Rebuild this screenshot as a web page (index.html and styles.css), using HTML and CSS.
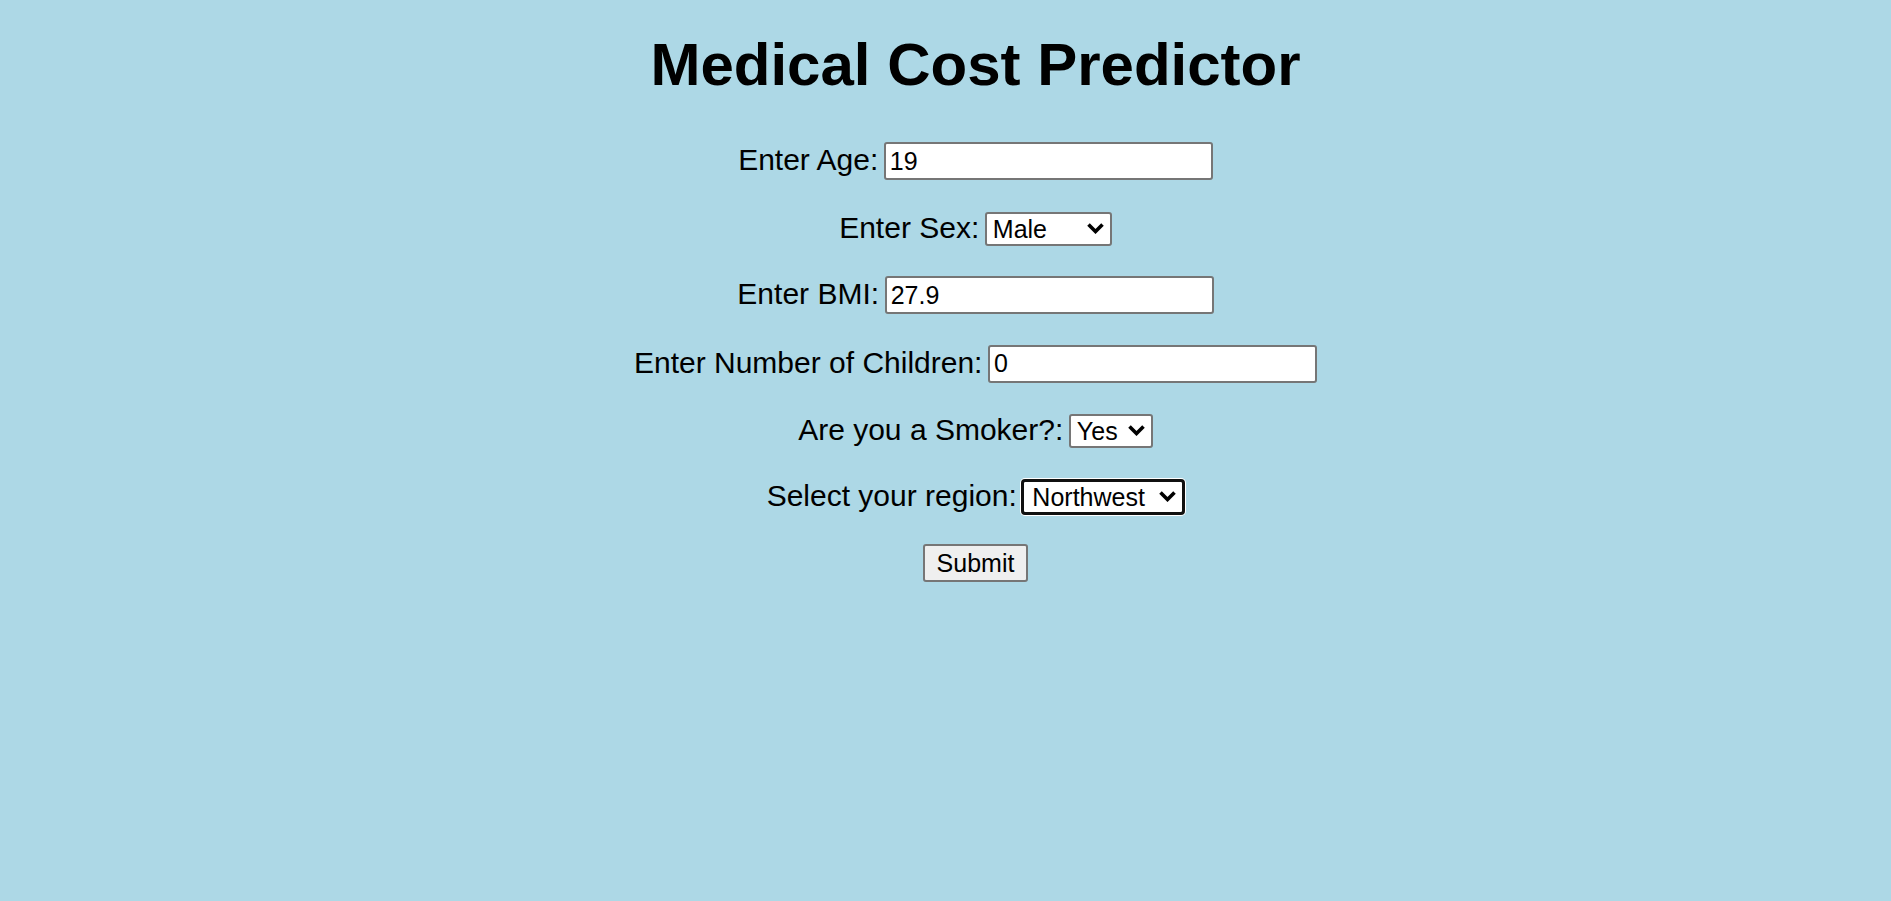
FILE: index.html
```html
<!DOCTYPE html>
<html lang="en">
<head>
<meta charset="utf-8">
<title>Medical Cost Predictor</title>
<link rel="stylesheet" href="styles.css">
</head>
<body>
<main class="page">
  <h1 class="title">Medical Cost Predictor</h1>
  <form class="form">
    <div class="row"><label class="label" for="age">Enter Age:</label> <input class="field" id="age" type="text" value="19"></div>
    <div class="row"><label class="label" for="sex">Enter Sex:</label> <span class="select-wrap"><select class="select select-sex" id="sex"><option>Male</option><option>Female</option></select><svg class="chevron" width="17" height="11" viewBox="0 0 17 11"><polyline points="1.5,1.5 8.5,8.5 15.5,1.5" fill="none" stroke="#000" stroke-width="3.6"/></svg></span></div>
    <div class="row"><label class="label" for="bmi">Enter BMI:</label> <input class="field" id="bmi" type="text" value="27.9"></div>
    <div class="row"><label class="label" for="children">Enter Number of Children:</label> <input class="field" id="children" type="text" value="0"></div>
    <div class="row"><label class="label" for="smoker">Are you a Smoker?:</label> <span class="select-wrap"><select class="select select-smoker" id="smoker"><option>Yes</option><option>No</option></select><svg class="chevron" width="17" height="11" viewBox="0 0 17 11"><polyline points="1.5,1.5 8.5,8.5 15.5,1.5" fill="none" stroke="#000" stroke-width="3.6"/></svg></span></div>
    <div class="row"><label class="label" for="region">Select your region:</label> <span class="select-wrap"><select class="select select-region is-focused" id="region"><option>Northwest</option><option>Northeast</option><option>Southeast</option><option>Southwest</option></select><svg class="chevron" width="17" height="11" viewBox="0 0 17 11"><polyline points="1.5,1.5 8.5,8.5 15.5,1.5" fill="none" stroke="#000" stroke-width="3.6"/></svg></span></div>
    <div class="row"><button class="submit" type="button">Submit</button></div>
  </form>
</main>
</body>
</html>
```
FILE: styles.css
```css
html, body {
  margin: 0;
  padding: 0;
  background: #add8e6;
}

body {
  font-family: "Liberation Sans", Arial, sans-serif;
  color: #000;
}

.page {
  padding: 30px 0 0 60px;
}

.title {
  margin: 0 0 43px;
  font-size: 60px;
  font-weight: bold;
  line-height: normal;
  text-align: center;
}

.form {
  display: flex;
  flex-direction: column;
  align-items: center;
  gap: 30.5px;
}

.row {
  font-size: 20px;
  white-space: nowrap;
}

.label {
  font-size: 30px;
}

.field {
  box-sizing: border-box;
  width: 329px;
  height: 38px;
  padding: 3px 4px;
  border: 2px solid #767676;
  border-radius: 3px;
  background: #fff;
  font-family: "Liberation Sans", Arial, sans-serif;
  font-size: 25px;
  color: #000;
  vertical-align: baseline;
}

.select-wrap {
  position: relative;
  display: inline-block;
}

.select {
  -webkit-appearance: none;
  appearance: none;
  box-sizing: border-box;
  height: 34px;
  padding: 0 6px;
  margin: 0;
  border: 2px solid #767676;
  border-radius: 3px;
  background: #fff;
  font-family: "Liberation Sans", Arial, sans-serif;
  font-size: 25px;
  color: #000;
}

.select-sex { width: 127px; }
.select-smoker { width: 84px; }
.select-region { width: 162px; padding-left: 8px; }

.is-focused {
  outline: 3px solid #101010;
  outline-offset: -2px;
  box-shadow: 0 0 0 2px #fff;
}

.chevron {
  position: absolute;
  right: 8px;
  top: 11px;
  pointer-events: none;
}

.submit {
  box-sizing: border-box;
  height: 38px;
  padding: 0 12px;
  border: 2px solid #767676;
  border-radius: 3px;
  background: #efefef;
  font-family: "Liberation Sans", Arial, sans-serif;
  font-size: 25px;
  color: #000;
}
```
